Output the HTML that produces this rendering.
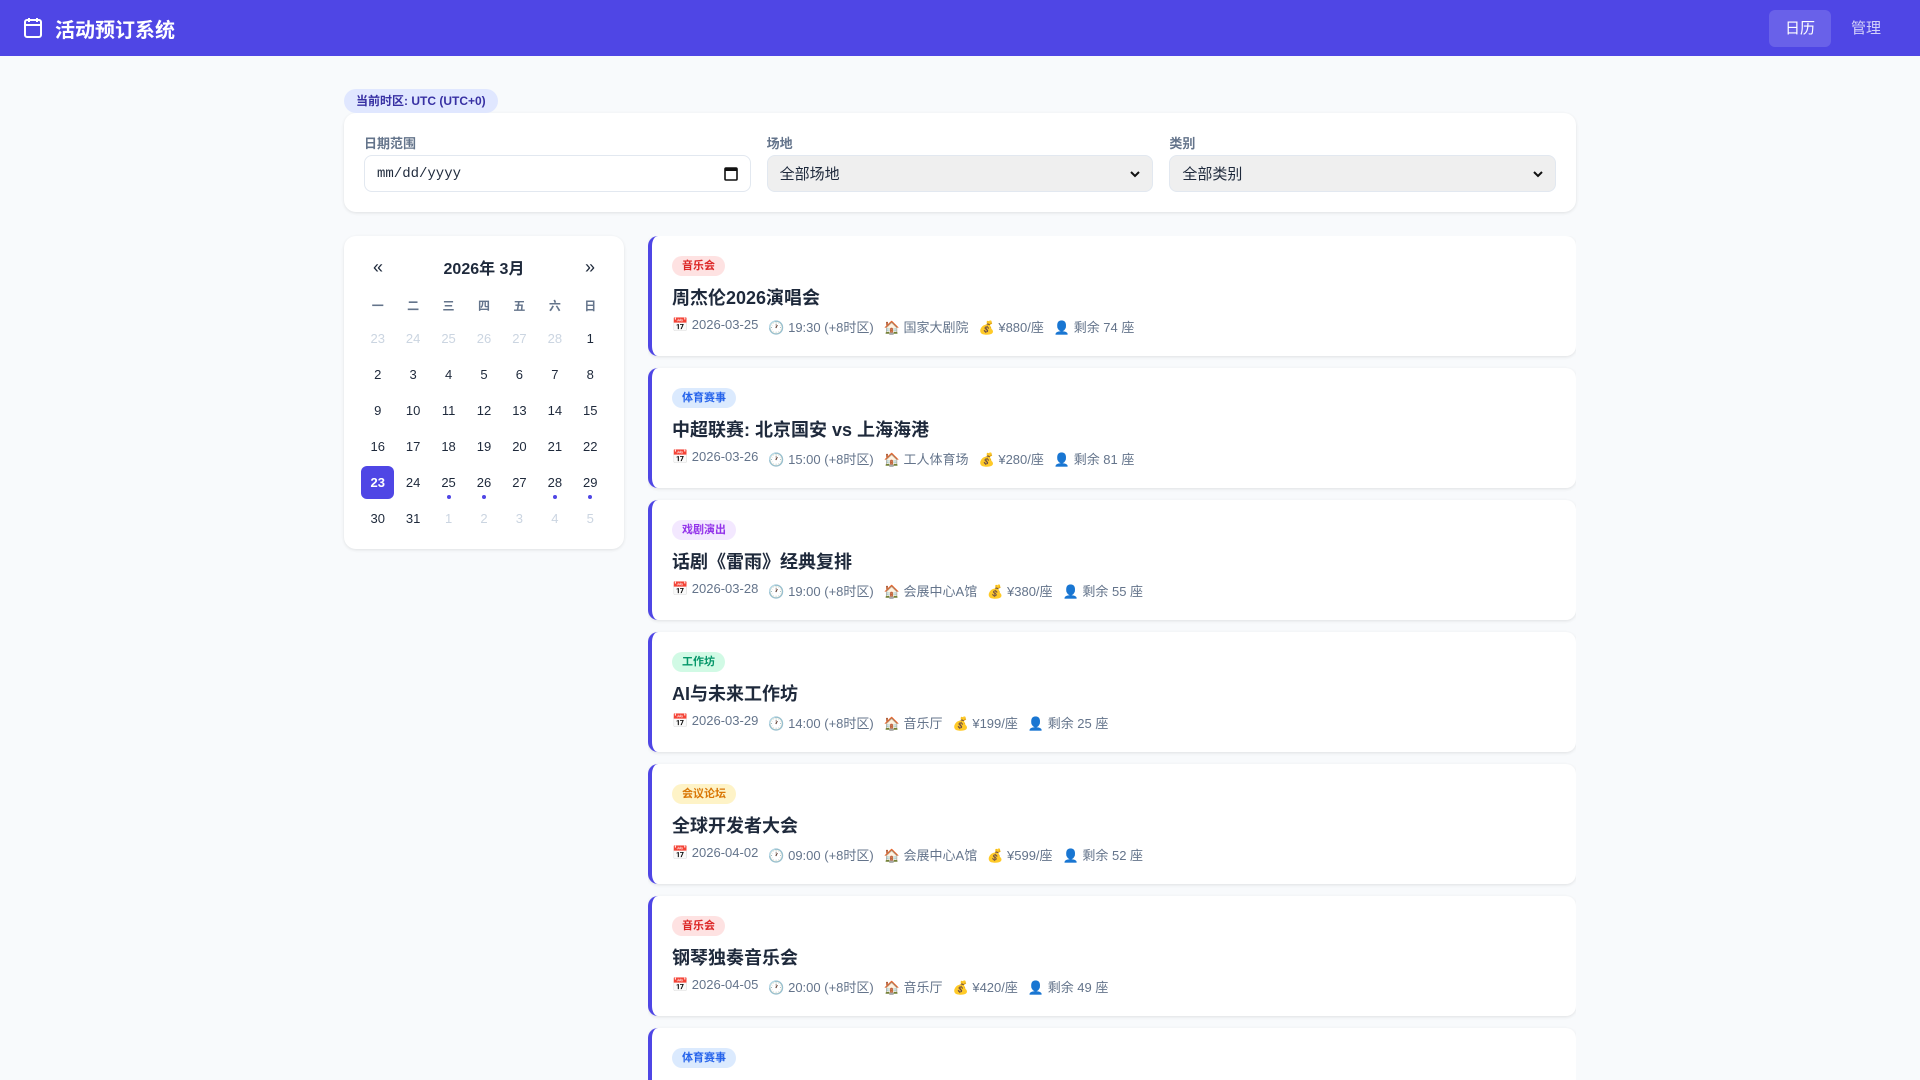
<!DOCTYPE html>
<html><head><meta charset="utf-8"><style>
*{box-sizing:border-box;margin:0;padding:0}
html,body{width:1920px;height:1080px;overflow:hidden}
body{background:#f8fafc;font-family:"Liberation Sans","Noto Sans CJK SC",sans-serif;color:#1e293b;position:relative}
.hdr{height:56px;background:#4f46e5;display:flex;align-items:center;padding:0 21px;color:#fff;position:relative}
.hdr h1{font-size:20px;font-weight:700;margin-left:10px}
.nav{position:absolute;right:39px;top:10px;display:flex;align-items:center}
.nav a{font-size:15px;color:#fff;padding:0 16px;height:37px;line-height:37px;border-radius:6px;display:block}
.nav a.act{background:rgba(255,255,255,.15)}
.nav a.off{color:rgba(255,255,255,.75);padding:0 0 0 20px}
.wrap{position:absolute;left:344px;width:1232px;top:89px}
.tz{display:inline-block;background:#e0e7ff;color:#3730a3;font-size:12px;font-weight:700;height:24px;line-height:25px;padding:0 12px;border-radius:12px}
.filter{background:#fff;border-radius:12px;box-shadow:0 1px 3px rgba(0,0,0,.1);height:99px;padding:20px 20px 0;display:flex;gap:16px}
.filter div{flex:1}
.filter label{display:block;font-size:13px;color:#64748b;font-weight:600;height:22px}
.inp{height:37px;border:1px solid #e2e8f0;border-radius:8px;display:flex;align-items:center;padding:0 12px;font-size:15px;justify-content:space-between}
.inp.sel{background:#efefef}
.inp.date{font-family:"Liberation Mono",monospace;font-size:14px}
.cal{position:absolute;left:0;top:147px;width:280px;height:313px;background:#fff;border-radius:12px;box-shadow:0 1px 3px rgba(0,0,0,.1);padding:16px}
.ch{display:flex;justify-content:space-between;align-items:center;height:28px;padding:0 13px;font-size:16px;font-weight:700;margin-top:1px}
.ch span.a{font-size:18px;font-weight:400}
.g{display:grid;grid-template-columns:repeat(7,1fr);text-align:center;font-size:13px}
.wd{color:#64748b;font-size:12px;font-weight:600;height:36px;line-height:38px;margin-top:6px}
.d{height:36px;line-height:32px;position:relative;border-radius:6px}
.d.m{color:#cbd5e1}
.d.s{background:#4f46e5;color:#fff;font-weight:700;margin:0 1px;height:33px;line-height:33px;margin-top:-1px;margin-bottom:4px}
.d.e::after{content:"";position:absolute;left:50%;bottom:4px;width:4px;height:4px;margin-left:-2px;border-radius:2px;background:#4f46e5}
.list{position:absolute;left:304px;top:147px;width:928px;height:844px;overflow:hidden}
.card{height:120px;background:#fff;border-radius:10px;border-left:4px solid #4f46e5;box-shadow:0 1px 3px rgba(0,0,0,.1);margin-bottom:12px;padding:20px 0 0 20px}
.tag{display:inline-block;height:20px;line-height:21px;font-size:11px;font-weight:700;padding:0 10px;border-radius:10px}
.t1{background:#fee2e2;color:#dc2626}.t2{background:#dbeafe;color:#2563eb}.t3{background:#f3e8ff;color:#9333ea}.t4{background:#d1fae5;color:#059669}.t5{background:#fef3c7;color:#d97706}
.card h3{font-size:18px;font-weight:700;margin-top:8px;height:26px}
.meta{font-size:13px;color:#64748b;margin-top:7px;display:flex;gap:10px}
</style></head><body>
<div class="hdr"><svg width="24" height="24" viewBox="0 0 24 24" fill="none" stroke="#fff" stroke-width="2"><rect x="4" y="4" width="16" height="17" rx="2"/><path d="M4 9h16M8 2v4M16 2v4"/></svg><h1>活动预订系统</h1>
<div class="nav"><a class="act">日历</a><a class="off">管理</a></div></div>
<div class="wrap">
<div class="tz">当前时区: UTC (UTC+0)</div>
<div class="filter">
<div><label>日期范围</label><div class="inp date"><span>mm/dd/yyyy</span><svg width="14" height="15" viewBox="0 0 14 15"><rect x="1" y="2" width="12" height="12" rx="1" fill="none" stroke="#111" stroke-width="1.6"/><rect x="1" y="2" width="12" height="3" fill="#111"/></svg></div></div>
<div><label>场地</label><div class="inp sel"><span>全部场地</span><svg width="10" height="8" viewBox="0 0 10 8"><path d="M1 2l4 4 4-4" fill="none" stroke="#111" stroke-width="2"/></svg></div></div>
<div><label>类别</label><div class="inp sel"><span>全部类别</span><svg width="10" height="8" viewBox="0 0 10 8"><path d="M1 2l4 4 4-4" fill="none" stroke="#111" stroke-width="2"/></svg></div></div>
</div>
</div>
<div class="wrap" style="top:89px">
<div class="cal">
<div class="ch"><span class="a">«</span><span>2026年 3月</span><span class="a">»</span></div>
<div class="g wd"><span>一</span><span>二</span><span>三</span><span>四</span><span>五</span><span>六</span><span>日</span></div>
<div class="g">
<span class="d m">23</span><span class="d m">24</span><span class="d m">25</span><span class="d m">26</span><span class="d m">27</span><span class="d m">28</span><span class="d">1</span>
<span class="d">2</span><span class="d">3</span><span class="d">4</span><span class="d">5</span><span class="d">6</span><span class="d">7</span><span class="d">8</span>
<span class="d">9</span><span class="d">10</span><span class="d">11</span><span class="d">12</span><span class="d">13</span><span class="d">14</span><span class="d">15</span>
<span class="d">16</span><span class="d">17</span><span class="d">18</span><span class="d">19</span><span class="d">20</span><span class="d">21</span><span class="d">22</span>
<span class="d s">23</span><span class="d">24</span><span class="d e">25</span><span class="d e">26</span><span class="d">27</span><span class="d e">28</span><span class="d e">29</span>
<span class="d">30</span><span class="d">31</span><span class="d m">1</span><span class="d m">2</span><span class="d m">3</span><span class="d m">4</span><span class="d m">5</span>
</div></div>
<div class="list">
<div class="card"><span class="tag t1">音乐会</span><h3>周杰伦2026演唱会</h3><div class="meta"><span>📅 2026-03-25</span><span>🕐 19:30 (+8时区)</span><span>🏠 国家大剧院</span><span>💰 ¥880/座</span><span>👤 剩余 74 座</span></div></div>
<div class="card"><span class="tag t2">体育赛事</span><h3>中超联赛: 北京国安 vs 上海海港</h3><div class="meta"><span>📅 2026-03-26</span><span>🕐 15:00 (+8时区)</span><span>🏠 工人体育场</span><span>💰 ¥280/座</span><span>👤 剩余 81 座</span></div></div>
<div class="card"><span class="tag t3">戏剧演出</span><h3>话剧《雷雨》经典复排</h3><div class="meta"><span>📅 2026-03-28</span><span>🕐 19:00 (+8时区)</span><span>🏠 会展中心A馆</span><span>💰 ¥380/座</span><span>👤 剩余 55 座</span></div></div>
<div class="card"><span class="tag t4">工作坊</span><h3>AI与未来工作坊</h3><div class="meta"><span>📅 2026-03-29</span><span>🕐 14:00 (+8时区)</span><span>🏠 音乐厅</span><span>💰 ¥199/座</span><span>👤 剩余 25 座</span></div></div>
<div class="card"><span class="tag t5">会议论坛</span><h3>全球开发者大会</h3><div class="meta"><span>📅 2026-04-02</span><span>🕐 09:00 (+8时区)</span><span>🏠 会展中心A馆</span><span>💰 ¥599/座</span><span>👤 剩余 52 座</span></div></div>
<div class="card"><span class="tag t1">音乐会</span><h3>钢琴独奏音乐会</h3><div class="meta"><span>📅 2026-04-05</span><span>🕐 20:00 (+8时区)</span><span>🏠 音乐厅</span><span>💰 ¥420/座</span><span>👤 剩余 49 座</span></div></div>
<div class="card"><span class="tag t2">体育赛事</span><h3></h3></div>
</div></div>
</body></html>
